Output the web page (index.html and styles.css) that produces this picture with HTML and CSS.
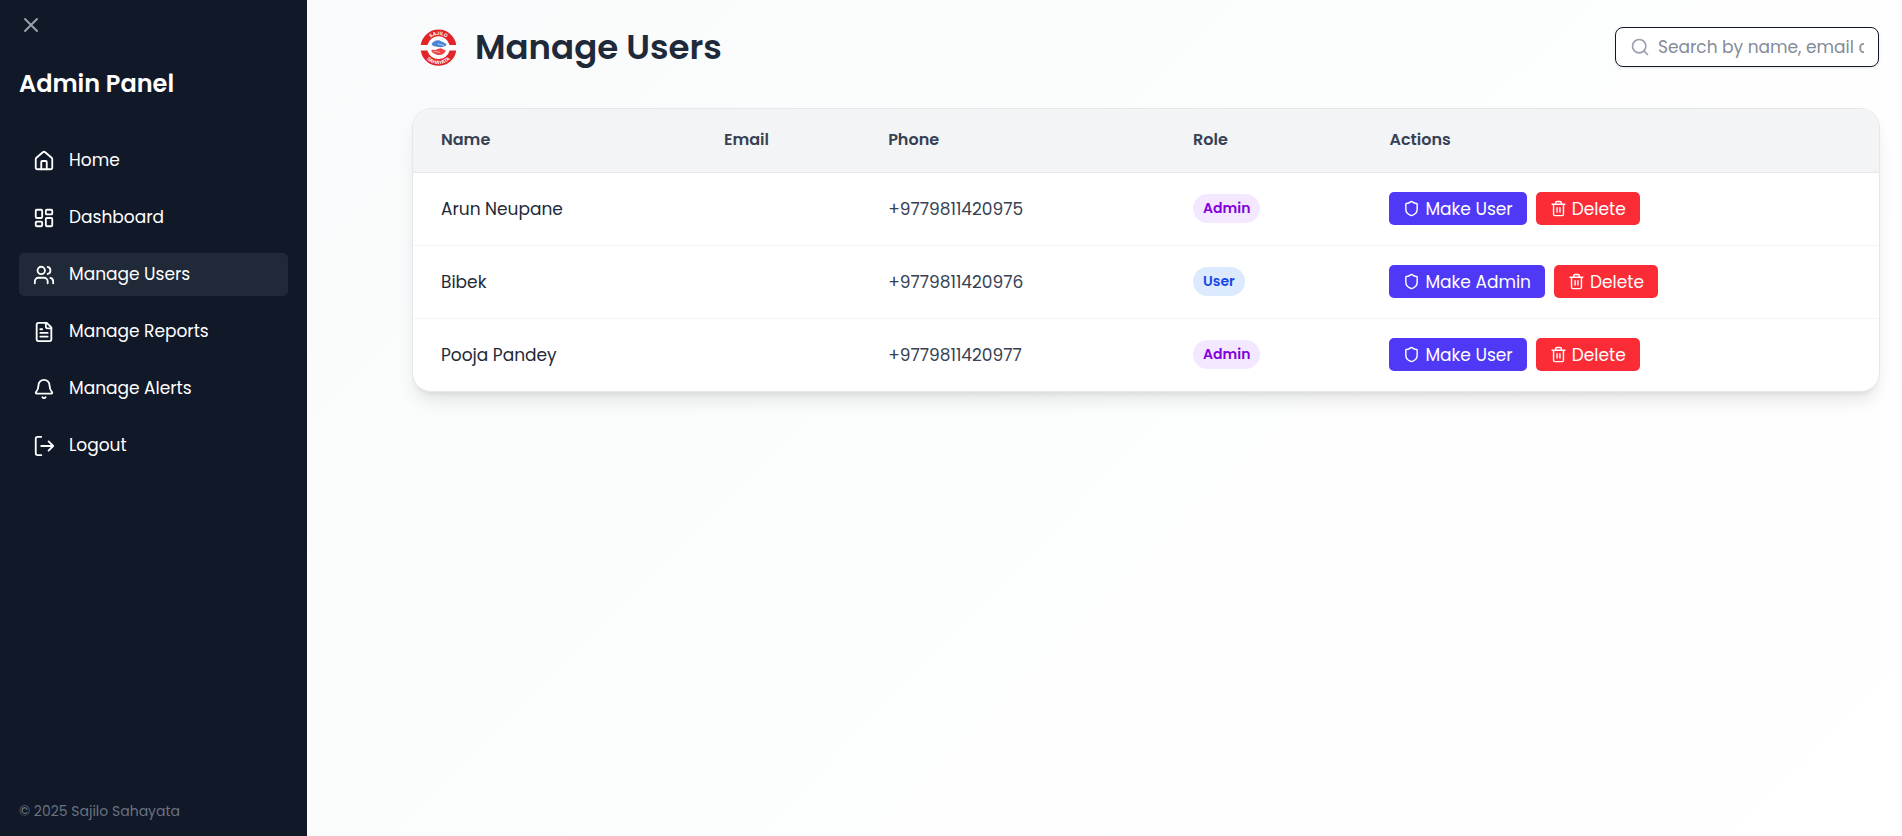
FILE: index.html
```html
<!DOCTYPE html>
<html lang="en">
<head>
<meta charset="utf-8">
<meta name="viewport" content="width=device-width, initial-scale=1">
<title>Manage Users</title>
<link rel="stylesheet" href="styles.css">
</head>
<body>
<svg class="sprite" aria-hidden="true">
  <symbol id="shield" viewBox="0 0 24 24"><path d="M20 13c0 5-3.500 7.500-7.660 8.950a1 1 0 0 1-.67-.01C7.500 20.500 4 18 4 13V6a1 1 0 0 1 1-1c2 0 4.500-1.200 6.240-2.720a1.170 1.170 0 0 1 1.520 0C14.510 3.810 17 5 19 5a1 1 0 0 1 1 1z"/></symbol>
  <symbol id="trash" viewBox="0 0 24 24"><path d="M3 6h18M19 6v14a2 2 0 0 1-2 2H7a2 2 0 0 1-2-2V6M8 6V4a2 2 0 0 1 2-2h4a2 2 0 0 1 2 2v2M10 11v6M14 11v6"/></symbol>
</svg>
<div class="app">
  <aside class="sidebar">
    <button class="close" type="button" aria-label="Close menu">
      <svg class="icon" viewBox="0 0 24 24"><path d="M18 6 6 18M6 6l12 12"/></svg>
    </button>
    <h2 class="brand">Admin Panel</h2>
    <nav class="nav">
      <a class="nav-link" href="#home"><svg class="icon" viewBox="0 0 24 24"><path d="M15 21v-8a1 1 0 0 0-1-1h-4a1 1 0 0 0-1 1v8"/><path d="M3 10a2 2 0 0 1 .709-1.528l7-5.999a2 2 0 0 1 2.582 0l7 5.999A2 2 0 0 1 21 10v9a2 2 0 0 1-2 2H5a2 2 0 0 1-2-2z"/></svg>Home</a>
      <a class="nav-link" href="#dashboard"><svg class="icon" viewBox="0 0 24 24"><rect width="7" height="9" x="3" y="3" rx="1"/><rect width="7" height="5" x="14" y="3" rx="1"/><rect width="7" height="9" x="14" y="12" rx="1"/><rect width="7" height="5" x="3" y="16" rx="1"/></svg>Dashboard</a>
      <a class="nav-link active" href="#users" aria-current="page"><svg class="icon" viewBox="0 0 24 24"><path d="M16 21v-2a4 4 0 0 0-4-4H6a4 4 0 0 0-4 4v2"/><circle cx="9" cy="7" r="4"/><path d="M22 21v-2a4 4 0 0 0-3-3.870M16 3.130a4 4 0 0 1 0 7.750"/></svg>Manage Users</a>
      <a class="nav-link" href="#reports"><svg class="icon" viewBox="0 0 24 24"><path d="M15 2H6a2 2 0 0 0-2 2v16a2 2 0 0 0 2 2h12a2 2 0 0 0 2-2V7Z"/><path d="M14 2v4a2 2 0 0 0 2 2h4M10 9H8M16 13H8M16 17H8"/></svg>Manage Reports</a>
      <a class="nav-link" href="#alerts"><svg class="icon" viewBox="0 0 24 24"><path d="M10.268 21a2 2 0 0 0 3.464 0"/><path d="M3.262 15.326A1 1 0 0 0 4 17h16a1 1 0 0 0 .740-1.673C19.410 13.956 18 12.499 18 8A6 6 0 0 0 6 8c0 4.499-1.411 5.956-2.738 7.326"/></svg>Manage Alerts</a>
      <a class="nav-link" href="#logout"><svg class="icon" viewBox="0 0 24 24"><path d="M9 22H5a2 2 0 0 1-2-2V4a2 2 0 0 1 2-2h4M17 17l5-5-5-5M22 12H9"/></svg>Logout</a>
    </nav>
    <footer class="copyright">© 2025 Sajilo Sahayata</footer>
  </aside>

  <main class="main">
    <header class="page-header">
      <div class="heading">
        <svg class="logo" viewBox="0 0 100 100" role="img" aria-label="Sajilo Sahayata logo">
          <circle cx="50" cy="50" r="48" fill="#fff"/>
          <path fill="#e02428" d="M2 43A48.500 48.500 0 0 1 98 43H80A31 31 0 0 0 20 43ZM2 58A48.500 48.500 0 0 0 98 58H80A31 31 0 0 1 20 58Z"/>
          <path id="arc-top" fill="none" d="M16 50A34 34 0 0 1 84 50"/>
          <path id="arc-bottom" fill="none" d="M5 50A45 45 0 0 0 95 50"/>
          <text class="logo-text"><textPath href="#arc-top" startOffset="50%">SAJILO</textPath></text>
          <text class="logo-text"><textPath href="#arc-bottom" startOffset="50%">SAHAYATA</textPath></text>
          <path fill="#4a86d4" d="M31 41C36 33 44 29 53 31L66 37 72 42 69 46 63 48 56 49 46 48 36 46Z"/>
          <path fill="#ee4444" d="M70 59C65 69 56 72 47 70L35 65 30 59 33 56 43 57 47 54 56 52 63 55Z"/>
          <path fill="none" stroke="#fff" stroke-width="1.500" d="M48 40l17 5M37 60l17 3"/>
        </svg>
        <h1 class="title">Manage Users</h1>
      </div>
      <label class="search">
        <svg class="icon" viewBox="0 0 24 24"><circle cx="11" cy="11" r="8"/><path d="m21 21-4.300-4.300"/></svg>
        <input class="search-input" type="text" aria-label="Search users" placeholder="Search by name, email or phone">
      </label>
    </header>

    <section class="card">
      <table class="users">
        <colgroup><col class="col-name"><col class="col-email"><col class="col-phone"><col class="col-role"><col class="col-actions"></colgroup>
        <thead>
          <tr><th scope="col">Name</th><th scope="col">Email</th><th scope="col">Phone</th><th scope="col">Role</th><th scope="col">Actions</th></tr>
        </thead>
        <tbody>
          <tr>
            <td class="name">Arun Neupane</td><td></td><td>+9779811420975</td>
            <td><span class="badge admin">Admin</span></td>
            <td><div class="actions"><button class="btn primary" type="button"><svg class="icon"><use href="#shield"/></svg>Make User</button><button class="btn danger" type="button"><svg class="icon"><use href="#trash"/></svg>Delete</button></div></td>
          </tr>
          <tr>
            <td class="name">Bibek</td><td></td><td>+9779811420976</td>
            <td><span class="badge user">User</span></td>
            <td><div class="actions"><button class="btn primary" type="button"><svg class="icon"><use href="#shield"/></svg>Make Admin</button><button class="btn danger" type="button"><svg class="icon"><use href="#trash"/></svg>Delete</button></div></td>
          </tr>
          <tr>
            <td class="name">Pooja Pandey</td><td></td><td>+9779811420977</td>
            <td><span class="badge admin">Admin</span></td>
            <td><div class="actions"><button class="btn primary" type="button"><svg class="icon"><use href="#shield"/></svg>Make User</button><button class="btn danger" type="button"><svg class="icon"><use href="#trash"/></svg>Delete</button></div></td>
          </tr>
        </tbody>
      </table>
    </section>
  </main>
</div>
</body>
</html>
```
FILE: styles.css
```css
*, *::before, *::after { box-sizing: border-box; }

body {
  margin: 0;
  font-family: Poppins, Inter, "Open Sans", sans-serif;
  font-size: 17px;
  line-height: 24px;
  color: #364153;
}

button, input { font: inherit; }

.sprite { display: none; }

.icon {
  flex: none;
  width: 22px;
  height: 22px;
  fill: none;
  stroke: currentColor;
  stroke-width: 2;
  stroke-linecap: round;
  stroke-linejoin: round;
}

.app { display: flex; min-height: 100vh; }

/* Sidebar */
.sidebar {
  flex: none;
  display: flex;
  flex-direction: column;
  width: 307px;
  padding: 13px 19px;
  background: #111827;
  color: #fff;
}

.close {
  align-self: flex-start;
  display: flex;
  padding: 0;
  border: 0;
  background: none;
  color: #99a1af;
  cursor: pointer;
}
.close .icon { width: 24px; height: 24px; }

.brand {
  margin: 28px 0 37px;
  font-size: 24px;
  line-height: 37px;
  font-weight: 600;
}

.nav { display: flex; flex-direction: column; gap: 14px; }

.nav-link {
  display: flex;
  align-items: center;
  gap: 14px;
  padding: 10px 14px;
  border-radius: 5px;
  color: inherit;
  line-height: 23px;
  font-weight: 400;
  text-decoration: none;
}
.nav-link.active { background: #1f2937; }

.copyright {
  margin-top: auto;
  font-size: 14px;
  color: #6a7282;
}

/* Page */
.main {
  flex: 1;
  min-width: 0;
  padding: 19px 22px 24px 105px;
  background: linear-gradient(135deg, #f9fafb, #fbfdfd 35%, #fefefe 70%, #fff);
}

.page-header {
  display: flex;
  align-items: center;
  justify-content: space-between;
  margin-bottom: 33px;
  padding: 0 1px 0 8px;
}

.heading { display: flex; align-items: center; gap: 18px; }

.logo { width: 37px; height: 37px; }
.logo-text {
  font-family: Inter, sans-serif;
  font-size: 13px;
  font-weight: 700;
  fill: #fff;
  text-anchor: middle;
}

.title {
  margin: 0;
  font-size: 34px;
  line-height: 56px;
  font-weight: 600;
  color: #1e2939;
}

.search {
  display: flex;
  align-items: center;
  gap: 8px;
  width: 264px;
  height: 40px;
  padding: 0 14px;
  border: 1px solid #111827;
  border-radius: 8px;
  background: #fff;
  box-shadow: 0 1px 3px rgb(0 0 0 / 10%);
  color: #99a1af;
}
.search .icon { width: 20px; height: 20px; }
.search-input {
  flex: 1;
  min-width: 0;
  padding: 0;
  border: 0;
  outline: 0;
  background: none;
  color: #1e2939;
}
.search-input::placeholder { color: #848b98; opacity: 1; }

.card {
  overflow: hidden;
  border: 1px solid #e5e7eb;
  border-radius: 19px;
  background: #fff;
  box-shadow: 0 12px 18px -4px rgb(0 0 0 / 10%), 0 5px 7px -5px rgb(0 0 0 / 10%);
}

.users {
  width: 100%;
  table-layout: fixed;
  border-collapse: collapse;
}
.col-name { width: 19.3%; }
.col-email { width: 11.2%; }
.col-phone { width: 20.8%; }
.col-role { width: 13.4%; }

.users th, .users td { padding: 0 28px; text-align: left; }
.users th {
  height: 63px;
  background: #f3f4f6;
  border-bottom: 1px solid #e5e7eb;
  font-size: 16px;
  font-weight: 600;
}
.users td { height: 73px; }
.users tbody tr + tr td { border-top: 1px solid #f3f4f6; }
.users .name { color: #1e2939; }

.badge {
  display: inline-block;
  padding: 3px 10px;
  border-radius: 15px;
  font-size: 14px;
  line-height: 23px;
  font-weight: 600;
}
.badge.admin { background: #f3e8ff; color: #8200db; }
.badge.user { background: #dbeafe; color: #1447e6; }

.actions { display: flex; gap: 9px; }

.btn {
  display: flex;
  align-items: center;
  gap: 5px;
  height: 33px;
  padding: 0 14px;
  border: 0;
  border-radius: 5px;
  color: #fff;
  font-weight: 400;
  white-space: nowrap;
  cursor: pointer;
}
.btn .icon { width: 17px; height: 17px; }
.btn.primary { background: #4f39f6; }
.btn.danger { background: #fb2c36; }
```
